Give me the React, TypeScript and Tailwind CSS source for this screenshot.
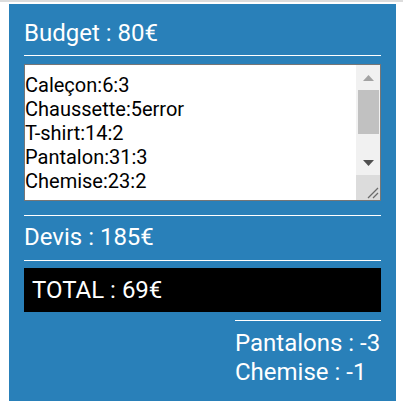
const lignes = ['Caleçon:6:3', 'Chaussette:5error', 'T-shirt:14:2', 'Pantalon:31:3', 'Chemise:23:2']

const manques = [
  { nom: 'Pantalons', qte: -3 },
  { nom: 'Chemise', qte: -1 },
]

function Arrow({ up, color }: { up?: boolean; color: string }) {
  return (
    <svg width="11" height="6" viewBox="0 0 11 6">
      <polygon points={up ? '0,6 11,6 5.5,0' : '0,0 11,0 5.5,6'} fill={color} />
    </svg>
  )
}

function FakeScrollbar() {
  return (
    <div className="flex w-[24px] flex-col bg-[#f1f1f1]">
      <div className="flex h-[25px] items-center justify-center">
        <Arrow up color="#a3a3a3" />
      </div>
      <div className="h-[60px] pl-[2px] pr-[1px]">
        <div className="h-[44px] bg-[#c1c1c1]" />
      </div>
      <div className="flex h-[25px] items-center justify-center">
        <Arrow color="#505050" />
      </div>
      <div className="h-[25px] bg-[#dcdcdc]">
        <svg width="24" height="25" viewBox="0 0 24 25">
          <line x1="12" y1="23" x2="22" y2="13" stroke="#6b6b6b" strokeWidth="1.2" />
          <line x1="17" y1="23" x2="22" y2="18" stroke="#6b6b6b" strokeWidth="1.2" />
        </svg>
      </div>
    </div>
  )
}

export default function App() {
  return (
    <div className="min-h-[412px] bg-white font-['Roboto',sans-serif]">
      <div className="h-[2px] bg-[#dcdcdc]" />
      <div className="ml-[9px] mt-[2px] w-[387px] bg-[#2980b9] px-[15px] pb-[14px] pt-[15px] text-white">
        <h2 className="text-[24px] leading-[28px]">Budget : 80€</h2>
        <hr className="mt-2 border-white" />

        <div className="mt-2 flex h-[137px] border border-[#767676] bg-white">
          <textarea
            className="flex-1 resize-none overflow-hidden bg-white pt-2 text-[20px] leading-[normal] text-black outline-none"
            defaultValue={lignes.join('\n')}
            spellCheck={false}
          />
          <FakeScrollbar />
        </div>

        <hr className="mt-[14px] border-white" />
        <h2 className="mt-[7px] text-[24px] leading-[28px]">Devis : 185€</h2>
        <hr className="mt-[9px] border-white" />

        <div className="mt-[7px] bg-black p-2 text-[24px] leading-[28px]">TOTAL : 69€</div>

        <div className="ml-auto mt-2 w-[146px] border-t border-white pt-2 text-[24px] leading-[29px]">
          {manques.map((m) => (
            <div key={m.nom}>
              {m.nom} : {m.qte}
            </div>
          ))}
        </div>
      </div>
    </div>
  )
}
